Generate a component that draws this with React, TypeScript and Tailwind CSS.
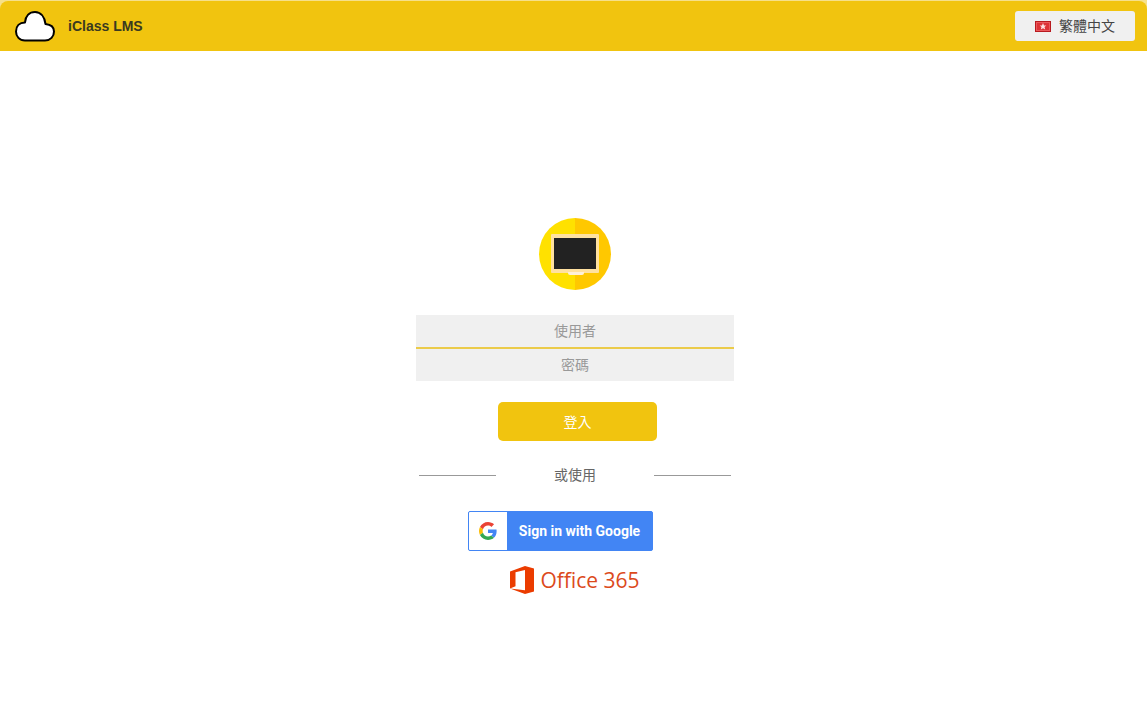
import React, { useState } from 'react';

function CloudLogo() {
  return (
    <svg width="42" height="32" viewBox="0 0 42 32" fill="none" aria-hidden="true">
      <path
        d="M11 30.500H31C36.500 30.500 40 26.500 40 21.500C40 17 36.500 14.500 31.500 14C30.500 6.500 26.500 2 21 2C15.500 2 11.500 6 11 12.500C5.500 12.500 2 16 2 21.500C2 26.500 5.500 30.500 11 30.500Z"
        fill="#fff"
        stroke="#000"
        strokeWidth="2"
        strokeLinejoin="round"
      />
    </svg>
  );
}

function HongKongFlag() {
  return (
    <svg width="16" height="11" viewBox="0 0 16 11" aria-hidden="true">
      <rect width="16" height="11" fill="#b81a1f" />
      <rect x="1" y="1" width="14" height="9" fill="#ea5a5c" />
      <rect x="2" y="2" width="12" height="7" fill="#dd3337" />
      <path d="M8 2L9 4.400L11.300 4.500L9.500 6L10.200 8.500L8 7.200L5.800 8.500L6.500 6L4.700 4.500L7 4.400Z" fill="#fde3e3" />
    </svg>
  );
}

function MonitorLogo() {
  return (
    <svg width="72" height="72" viewBox="0 0 72 72" aria-hidden="true">
      <path d="M36 0A36 36 0 0 0 36 72Z" fill="#ffe100" />
      <path d="M36 0A36 36 0 0 1 36 72Z" fill="#ffc800" />
      <rect x="12" y="16" width="48" height="39" rx="1" fill="#ffe1a0" />
      <path d="M29 54H45V55Q45 57 43 57H31Q29 57 29 55Z" fill="#fff0d8" />
      <rect x="15" y="20" width="42" height="31" fill="#222" />
    </svg>
  );
}

function GoogleLogo() {
  return (
    <svg width="18" height="18" viewBox="0 0 48 48" aria-hidden="true">
      <path fill="#EA4335" d="M24 9.500c3.540 0 6.710 1.220 9.210 3.600l6.850-6.850C35.900 2.380 30.470 0 24 0 14.620 0 6.510 5.380 2.560 13.220l7.980 6.190C12.430 13.720 17.740 9.500 24 9.500z" />
      <path fill="#4285F4" d="M46.980 24.550c0-1.570-.15-3.090-.38-4.550H24v9.020h12.940c-.58 2.960-2.260 5.480-4.780 7.180l7.730 6c4.510-4.180 7.090-10.360 7.090-17.650z" />
      <path fill="#FBBC05" d="M10.530 28.590c-.48-1.450-.76-2.990-.76-4.590s.27-3.140.76-4.590l-7.980-6.190C.92 16.460 0 20.120 0 24c0 3.880.92 7.540 2.560 10.780l7.970-6.190z" />
      <path fill="#34A853" d="M24 48c6.480 0 11.930-2.130 15.890-5.810l-7.730-6c-2.150 1.450-4.920 2.300-8.160 2.300-6.260 0-11.570-4.220-13.470-9.910l-7.980 6.190C6.510 42.620 14.620 48 24 48z" />
    </svg>
  );
}

function OfficeLogo() {
  return (
    <svg width="24" height="28" viewBox="0 0 24 28" aria-hidden="true">
      <path d="M0 5.500L15 0L24 2.500V25.500L15 28L0 22.500L15 24.300V4L5.500 6.200V20.300L0 22.500Z" fill="#eb3c00" />
    </svg>
  );
}

export default function App() {
  const [username, setUsername] = useState('');
  const [password, setPassword] = useState('');

  const handleSubmit = (e: React.FormEvent) => {
    e.preventDefault();
  };

  return (
    <div className="min-h-screen bg-white font-['Liberation_Sans','Noto_Sans_CJK_TC',sans-serif] text-sm text-[#444]">
      {/* Header */}
      <div className="bg-[#f6e08a] pt-px">
        <header className="flex h-[50px] items-center justify-between rounded-t-lg bg-[#f1c40f] pl-3.5 pr-3">
          <div className="flex items-center gap-3">
            <CloudLogo />
            <h1 className="text-sm font-bold text-[#3a3a20]">iClass LMS</h1>
          </div>
          <button
            type="button"
            className="flex h-[30px] w-[120px] items-center justify-center gap-2 rounded-[3px] bg-[#f0f0f0] text-[#444]"
          >
            <HongKongFlag />
            <span>繁體中文</span>
          </button>
        </header>
      </div>

      {/* Login */}
      <main className="flex flex-col items-center pl-[3px] pt-[167px] pb-8">
        <MonitorLogo />

        <form onSubmit={handleSubmit} className="mt-[25px] w-[318px]">
          <input
            type="text"
            aria-label="使用者"
            placeholder="使用者"
            value={username}
            onChange={(e) => setUsername(e.target.value)}
            className="block h-[34px] w-full border-b-2 border-[#ebcb4a] bg-[#f0f0f0] text-center outline-none placeholder:text-[#999]"
          />
          <input
            type="password"
            aria-label="密碼"
            placeholder="密碼"
            value={password}
            onChange={(e) => setPassword(e.target.value)}
            className="block h-8 w-full bg-[#f0f0f0] text-center outline-none placeholder:text-[#999]"
          />
          <button
            type="submit"
            className="ml-[82px] mt-[21px] block h-[39px] w-1/2 rounded-[5px] bg-[#f1c40f] text-white hover:bg-[#e5b90c]"
          >
            登入
          </button>
        </form>

        <div className="mt-6 flex w-[312px] items-center justify-between">
          <hr className="w-[77px] border-[#999]" />
          <span className="text-[#666]">或使用</span>
          <hr className="w-[77px] border-[#999]" />
        </div>

        <div className="mt-[26px] flex w-[318px] flex-col">
          <button
            type="button"
            className="ml-[52px] flex h-10 w-[185px] items-stretch rounded-[2px] border border-[#4285f4] bg-[#4285f4] font-[Roboto,sans-serif] font-bold text-white"
          >
            <span className="flex w-[38px] items-center justify-center rounded-l-[1px] bg-white">
              <GoogleLogo />
            </span>
            <span className="flex flex-1 items-center justify-center whitespace-nowrap">Sign in with Google</span>
          </button>

          <a href="#office365" className="mt-[15px] flex h-7 items-center justify-center gap-1.5 text-[#dc4a1c]">
            <OfficeLogo />
            <span className="whitespace-nowrap font-['Open_Sans','Noto_Sans',sans-serif] text-[21px] leading-7">Office 365</span>
          </a>
        </div>
      </main>
    </div>
  );
}
